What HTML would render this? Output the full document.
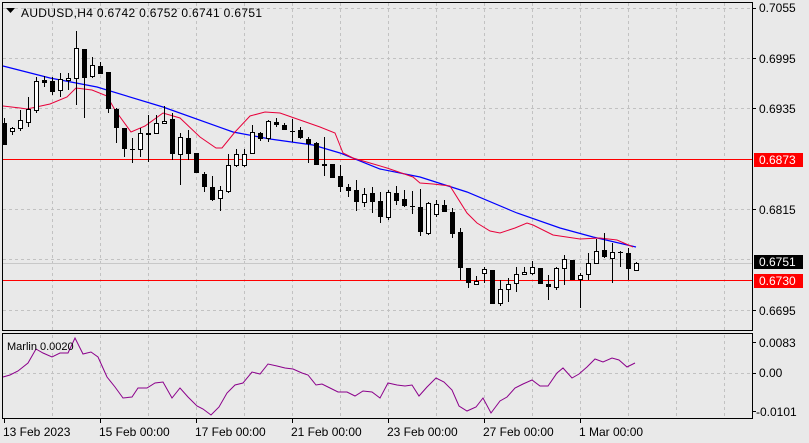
<!DOCTYPE html>
<html><head><meta charset="utf-8"><style>
html,body{margin:0;padding:0;background:#e9e9e9;}
svg{display:block;font-family:"Liberation Sans",sans-serif;}
</style></head><body>
<svg width="809" height="443" viewBox="0 0 809 443" xmlns="http://www.w3.org/2000/svg">
<rect width="809" height="443" fill="#e9e9e9"/>
<g stroke="#c2c2c2" stroke-width="1" stroke-dasharray="3,3" fill="none">
<path d="M52.5 3V330M100.5 3V330M148.5 3V330M196.5 3V330M244.5 3V330M292.5 3V330M340.5 3V330M388.5 3V330M436.5 3V330M484.5 3V330M532.5 3V330M580.5 3V330M628.5 3V330M676.5 3V330M724.5 3V330"/>
<path d="M52.5 335V418M100.5 335V418M148.5 335V418M196.5 335V418M244.5 335V418M292.5 335V418M340.5 335V418M388.5 335V418M436.5 335V418M484.5 335V418M532.5 335V418M580.5 335V418M628.5 335V418M676.5 335V418M724.5 335V418"/>
<path d="M3 8.5H752M3 58.5H752M3 108.5H752M3 159.5H752M3 209.5H752M3 259.5H752M3 310.5H752M3 373.5H752"/>
</g>
<path d="M3 263.5H752" stroke="#c8c8c8"/>
<path d="M3 159.5H752M3 280.5H752" stroke="#ff0000" stroke-width="1"/>
<polyline fill="none" stroke="#0000ff" stroke-width="1.2" points="3,66 50,78 97,87 163,107 233,132 270,139 313,145 340,153 380,169 420,177 467,192 517,213 560,228 593,237 636,247"/>
<polyline fill="none" stroke="#e8003a" stroke-width="1" points="3,106 20,108 27,109 50,104 67,97 76,88 92,90 107,96 115,110 131,132 145,126 163,113 180,118 200,137 216,148 222,148 235,132 250,116 265,112 280,113 300,120 320,127 335,133 343,153 353,158 370,163 387,168 413,177 420,183 433,184 450,186 467,213 477,223 490,231 500,233 515,228 527,223 533,225 553,235 580,239 600,238 617,240 633,247"/>
<g stroke="#000" stroke-width="1">
<path d="M4.5 118V145M12.5 127V135M20.5 110V131M28.5 97V127M36.5 77V113M44.5 76V87M52.5 77V95M60.5 73V97M68.5 73V90M76.5 31V105M84.5 49V118M92.5 57V78M100.5 62V74M108.5 72V113M116.5 108V143M124.5 128V157M132.5 138V163M140.5 128V157M148.5 115V162M156.5 115V133M164.5 106V123M172.5 113V160M180.5 133V185M188.5 130V160M196.5 153V173M204.5 172V192M212.5 176V201M220.5 186V211M228.5 154V193M236.5 149V167M244.5 149V167M252.5 125V153M260.5 132V141M268.5 120V142M276.5 118V127M284.5 123V130M292.5 119V142M300.5 127V139M308.5 137V163M316.5 142V165M324.5 137V176M332.5 164V178M340.5 165V192M348.5 184V197M356.5 180V211M364.5 188V207M372.5 187V213M380.5 192V223M388.5 190V220M396.5 186V205M404.5 190V207M412.5 191V214M420.5 189V236M428.5 202V235M436.5 200V217M444.5 200V212M452.5 208V238M460.5 228V280M468.5 268V288M476.5 276V285M484.5 267V283M492.5 270V304M500.5 280V306M508.5 278V302M516.5 267V292M524.5 267V275M532.5 261V275M540.5 268V284M548.5 275V300M556.5 267V290M564.5 255V285M572.5 260V280M580.5 273V308M588.5 253V280M596.5 239V263M604.5 233V258M612.5 243V283M620.5 251V267M628.5 248V280M636.5 262V271"/>
<path d="M130 149.5H135M290 131.5H295M410 206.5H415M618 252.5H623"/>
</g>
<g fill="#000">
<rect x="2" y="123" width="5" height="22"/><rect x="42" y="80" width="5" height="3"/><rect x="50" y="81" width="5" height="11"/><rect x="82" y="49" width="5" height="29"/><rect x="98" y="66" width="5" height="8"/><rect x="106" y="72" width="5" height="37"/><rect x="114" y="109" width="5" height="19"/><rect x="122" y="128" width="5" height="21"/><rect x="146" y="133" width="5" height="2"/><rect x="170" y="119" width="5" height="35"/><rect x="186" y="138" width="5" height="16"/><rect x="194" y="153" width="5" height="20"/><rect x="202" y="174" width="5" height="13"/><rect x="210" y="187" width="5" height="13"/><rect x="258" y="133" width="5" height="6"/><rect x="274" y="122" width="5" height="3"/><rect x="282" y="125" width="5" height="5"/><rect x="298" y="130" width="5" height="8"/><rect x="306" y="139" width="5" height="5"/><rect x="314" y="143" width="5" height="22"/><rect x="322" y="164" width="5" height="2"/><rect x="330" y="164" width="5" height="14"/><rect x="338" y="176" width="5" height="11"/><rect x="346" y="187" width="5" height="4"/><rect x="354" y="190" width="5" height="12"/><rect x="370" y="193" width="5" height="9"/><rect x="378" y="201" width="5" height="16"/><rect x="394" y="193" width="5" height="8"/><rect x="402" y="199" width="5" height="7"/><rect x="418" y="207" width="5" height="25"/><rect x="442" y="205" width="5" height="7"/><rect x="450" y="212" width="5" height="22"/><rect x="458" y="232" width="5" height="36"/><rect x="466" y="268" width="5" height="15"/><rect x="490" y="270" width="5" height="34"/><rect x="538" y="268" width="5" height="16"/><rect x="546" y="284" width="5" height="3"/><rect x="570" y="260" width="5" height="20"/><rect x="602" y="250" width="5" height="7"/><rect x="626" y="253" width="5" height="16"/>
</g>
<g fill="#fff" stroke="#000" stroke-width="1">
<rect x="10.5" y="128.5" width="4" height="3"/><rect x="18.5" y="120.5" width="4" height="8"/><rect x="26.5" y="109.5" width="4" height="13"/><rect x="34.5" y="81.5" width="4" height="29"/><rect x="58.5" y="79.5" width="4" height="11"/><rect x="66.5" y="78.5" width="4" height="2"/><rect x="74.5" y="48.5" width="4" height="30"/><rect x="90.5" y="65.5" width="4" height="11"/><rect x="138.5" y="133.5" width="4" height="16"/><rect x="154.5" y="123.5" width="4" height="10"/><rect x="162.5" y="121.5" width="4" height="2"/><rect x="178.5" y="137.5" width="4" height="17"/><rect x="218.5" y="190.5" width="4" height="8"/><rect x="226.5" y="165.5" width="4" height="26"/><rect x="234.5" y="154.5" width="4" height="11"/><rect x="242.5" y="154.5" width="4" height="11"/><rect x="250.5" y="132.5" width="4" height="21"/><rect x="266.5" y="121.5" width="4" height="17"/><rect x="362.5" y="194.5" width="4" height="8"/><rect x="386.5" y="192.5" width="4" height="25"/><rect x="426.5" y="203.5" width="4" height="30"/><rect x="434.5" y="204.5" width="4" height="10"/><rect x="474.5" y="281.5" width="4" height="3"/><rect x="482.5" y="269.5" width="4" height="4"/><rect x="498.5" y="289.5" width="4" height="14"/><rect x="506.5" y="284.5" width="4" height="5"/><rect x="514.5" y="274.5" width="4" height="9"/><rect x="522.5" y="272.5" width="4" height="2"/><rect x="530.5" y="267.5" width="4" height="6"/><rect x="554.5" y="268.5" width="4" height="19"/><rect x="562.5" y="259.5" width="4" height="9"/><rect x="578.5" y="275.5" width="4" height="4"/><rect x="586.5" y="263.5" width="4" height="11"/><rect x="594.5" y="251.5" width="4" height="12"/><rect x="610.5" y="252.5" width="4" height="6"/><rect x="634.5" y="263.5" width="4" height="7"/>
</g>
<polyline fill="none" stroke="#8b008b" stroke-width="1" points="3,377 10,375 18,371 28,363 36,349 43,353 52,357 60,353 68,353 75,338 83,354 91,352 98,357 107,377 115,387 123,398 132,397 138,388 147,388 155,383 163,382 172,398 180,388 188,397 197,406 203,409 211,415 219,407 227,393 235,385 243,383 252,372 260,374 268,364 277,366 285,368 293,369 302,373 308,375 316,385 322,384 330,388 338,392 347,392 355,396 363,391 372,392 380,398 388,383 397,385 405,386 412,385 419,396 427,387 436,378 444,382 452,390 459,406 467,411 476,407 483,398 491,413 500,401 507,397 515,388 523,384 532,380 540,386 548,386 557,373 563,368 572,378 579,374 587,367 595,359 603,362 612,358 619,360 627,367 635,363"/>
<g fill="none" stroke="#000" stroke-width="1">
<rect x="2.5" y="2.5" width="750" height="328"/>
<rect x="2.5" y="333.5" width="750" height="85"/>
<path d="M752 8.5h4M752 58.5h4M752 108.5h4M752 209.5h4M752 310.5h4M752 342.5h4M752 373.5h4M752 411.5h4"/>
<path d="M4.5 419v4M100.5 419v4M196.5 419v4M292.5 419v4M388.5 419v4M484.5 419v4M580.5 419v4"/>
</g>
<path d="M6 8h9l-4.5 5z" fill="#000"/>
<text x="21" y="17" font-size="12" fill="#000" textLength="241" lengthAdjust="spacing">AUDUSD,H4  0.6742 0.6752 0.6741 0.6751</text>
<text x="7" y="350" font-size="11" fill="#000">Marlin 0.0020</text>
<g font-size="12" fill="#000">
<text x="759" y="12">0.7055</text>
<text x="759" y="63">0.6995</text>
<text x="759" y="113">0.6935</text>
<text x="759" y="214">0.6815</text>
<text x="759" y="315">0.6695</text>
<text x="759" y="347">0.0083</text>
<text x="759" y="377">0.00</text>
<text x="756" y="416">-0.0101</text>
</g>
<rect x="754" y="153" width="49" height="14" fill="#ff0000"/>
<text x="759" y="164" font-size="12" fill="#fff">0.6873</text>
<rect x="754" y="255" width="49" height="14" fill="#000"/>
<text x="759" y="266" font-size="12" fill="#fff">0.6751</text>
<rect x="754" y="274" width="49" height="14" fill="#ff0000"/>
<text x="759" y="285" font-size="12" fill="#fff">0.6730</text>
<g font-size="12" fill="#000">
<text x="3" y="436">13 Feb 2023</text>
<text x="99" y="436">15 Feb 00:00</text>
<text x="195" y="436">17 Feb 00:00</text>
<text x="291" y="436">21 Feb 00:00</text>
<text x="387" y="436">23 Feb 00:00</text>
<text x="483" y="436">27 Feb 00:00</text>
<text x="579" y="436">1 Mar 00:00</text>
</g>
</svg>
</body></html>
